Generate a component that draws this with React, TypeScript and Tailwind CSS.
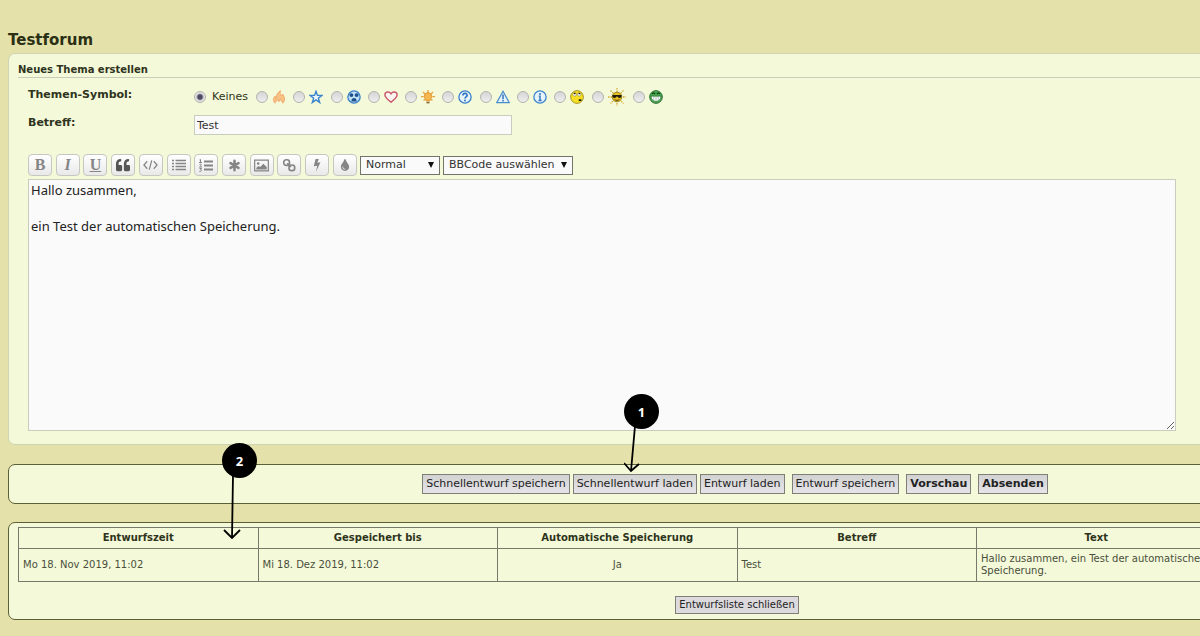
import React, { useState } from 'react';
import { FaQuoteLeft, FaTint } from 'react-icons/fa';

const FlameIcon = () => (
  <svg viewBox="0 0 16 16" className="w-[14px] h-[14px]">
    <path d="M3.500 15C1 12.500 1.200 9.500 3.500 7c.2 1.500.6 2.200 1.300 2.600C4.700 6 6.500 2.600 9.600.8 8.800 3.500 9.500 5 10.900 6.800c.8-.4 1.100-1.100 1-2.200 2.600 3 3.500 7.500.4 10.400-.5-1.800-1.600-3-2.800-4.200-.3 1.300-.9 2-1.800 2.500-.5-.9-.7-1.600-.7-2.500C5 12 4 13.200 3.500 15z" fill="#f9c184" stroke="#f0a060" strokeWidth="1" />
  </svg>
);

const StarIcon = () => (
  <svg viewBox="0 0 16 16" className="w-[14px] h-[14px]">
    <path d="M8 1.500l1.700 4.700 5 .1-4 3.100 1.500 4.900L8 11.400l-4.200 2.900 1.500-4.900-4-3.100 5-.1z" fill="#eef6fb" stroke="#3a84cc" strokeWidth="1.600" />
  </svg>
);

const RadioactiveIcon = () => (
  <svg viewBox="0 0 16 16" className="w-[14px] h-[14px]">
    <circle cx="8" cy="8" r="7" fill="#bfe0f6" stroke="#3a80c8" strokeWidth="1.500" />
    <circle cx="5" cy="5.800" r="2.200" fill="#1d4f8c" />
    <circle cx="11" cy="5.800" r="2.200" fill="#1d4f8c" />
    <path d="M5 13c0-5 6-5 6 0z" fill="#1d4f8c" />
  </svg>
);

const HeartIcon = () => (
  <svg viewBox="0 0 16 16" className="w-[14px] h-[14px]">
    <path d="M8 14C4 11 1 8.500 1 5.500 1 1.800 6 1 8 4.300 10 1 15 1.800 15 5.500 15 8.500 12 11 8 14z" fill="#fdf3ee" stroke="#c9556b" strokeWidth="1.600" />
  </svg>
);

const IdeaIcon = () => (
  <svg viewBox="0 0 16 16" className="w-[14px] h-[14px]">
    <path d="M8 0v3M0 7.500h3M13 7.500h3M2.300 2.300l2 2M13.700 2.300l-2 2M3 12l1.500-1.500M13 12l-1.500-1.500" stroke="#e9a23b" strokeWidth="1.500" />
    <path d="M6 12.500C6 10.500 3.800 10 3.800 7.200a4.200 4.200 0 0 1 8.400 0C12.200 10 10 10.500 10 12.500z" fill="#f6b84e" stroke="#d98c28" />
    <path d="M6.300 13.500h3.400v1.800H6.300z" fill="#8a6a3a" />
  </svg>
);

const QuestionIcon = () => (
  <svg viewBox="0 0 16 16" className="w-[14px] h-[14px]">
    <circle cx="8" cy="8" r="7" fill="#e6f3fb" stroke="#3a80c8" strokeWidth="1.500" />
    <path d="M5.700 6.300c0-3.200 4.700-3 4.700-.3C10.400 7.800 8 7.800 8 9.800" fill="none" stroke="#2f74bd" strokeWidth="1.900" />
    <circle cx="8" cy="12" r="1.100" fill="#2f74bd" />
  </svg>
);

const AlertIcon = () => (
  <svg viewBox="0 0 16 16" className="w-[14px] h-[14px]">
    <path d="M8 1.500L15 14.300H1z" fill="#e6f3fb" stroke="#4a8ccb" strokeWidth="1.400" />
    <path d="M8 5v5.500M8 11.500v1.600" stroke="#2f74bd" strokeWidth="1.700" />
  </svg>
);

const InfoIcon = () => (
  <svg viewBox="0 0 16 16" className="w-[14px] h-[14px]">
    <circle cx="8" cy="8" r="7" fill="#e6f3fb" stroke="#3f86cc" strokeWidth="1.500" />
    <circle cx="8" cy="4.500" r="1.100" fill="#2f74bd" />
    <path d="M6.500 7H8v5M6.300 12h3.500" fill="none" stroke="#2f74bd" strokeWidth="1.600" />
  </svg>
);

const RollEyesIcon = () => (
  <svg viewBox="0 0 16 16" className="w-[14px] h-[14px]">
    <circle cx="8" cy="8" r="7.300" fill="#f7e024" stroke="#8e7c14" strokeWidth=".9" />
    <ellipse cx="5.300" cy="5" rx="2.100" ry="2" fill="#fff" stroke="#6b5c10" strokeWidth=".5" />
    <ellipse cx="10.500" cy="5" rx="2.100" ry="2" fill="#fff" stroke="#6b5c10" strokeWidth=".5" />
    <path d="M4.500 3.300h1.800v1.500H4.500zM9.800 3.300h1.800v1.500H9.800zM10 10.500h3v2h-3z" fill="#1d1a08" />
  </svg>
);

const SunIcon = () => (
  <svg viewBox="0 0 18 18" className="w-[18px] h-[18px]">
    <path d="M9 0v18M0 9h18M2.500 2.500l13 13M15.500 2.500l-13 13" stroke="#d6ae35" strokeWidth="1.300" strokeDasharray="1.500 1" />
    <circle cx="9" cy="9" r="4.800" fill="#e9c222" stroke="#8b7018" strokeWidth=".8" />
    <path d="M4.500 7h9v1.500c0 1.800-3.500 2-4 0h-1c-.5 2-4 1.800-4 0z" fill="#1f1d10" />
    <path d="M6.500 11.300c1.500 1.500 3.500 1.500 5 0" fill="none" stroke="#5b4708" />
  </svg>
);

const GreenGrinIcon = () => (
  <svg viewBox="0 0 16 16" className="w-[14px] h-[14px]">
    <circle cx="8" cy="8" r="7.300" fill="#47a64b" stroke="#1c5c2b" strokeWidth=".9" />
    <path d="M3.500 4.500c1-1.300 2.500-1.300 3.500 0M9 4.500c1-1.300 2.500-1.300 3.500 0" fill="none" stroke="#123d1c" strokeWidth="1.300" />
    <path d="M2.300 7h11.400c0 8-11.400 8-11.400 0z" fill="#fff" stroke="#2b6b38" strokeWidth=".8" />
    <path d="M5.500 7v5M8 7v6M10.500 7v5" stroke="#6b9a74" strokeWidth=".6" />
  </svg>
);

const CodeIcon = () => (
  <svg viewBox="0 0 16 12" className="w-[15px] h-[12px]" fill="none" stroke="currentColor" strokeWidth="1.300">
    <path d="M4.500 2L1 6l3.500 4M11.500 2L15 6l-3.500 4M9.300 1L6.700 11" />
  </svg>
);

const ListIcon = () => (
  <svg viewBox="0 0 14 12" className="w-[14px] h-[12px]" stroke="currentColor" strokeWidth="1.500">
    <path d="M0 1.500h2M0 4.500h2M0 7.500h2M0 10.500h2M3.500 1.500H14M3.500 4.500H14M3.500 7.500H14M3.500 10.500H14" />
  </svg>
);

const NumberedListIcon = () => (
  <svg viewBox="0 0 14 13" className="w-[14px] h-[13px]" fill="none" stroke="currentColor">
    <path d="M5 2.500h9M5 6.500h9M5 10.500h9" strokeWidth="1.800" />
    <path d="M.5 1l1-.5v3M0 3.500h3M.5 5.500c2-1 2.500.5 0 2.500h2.500M.5 9.500h2l-1 1.300c1.500 0 1.500 1.700-1.200 1.500" strokeWidth="1" />
  </svg>
);

const AsteriskIcon = () => (
  <svg viewBox="0 0 14 14" className="w-[13px] h-[13px]" stroke="currentColor" strokeWidth="2.800" strokeLinecap="round">
    <path d="M7 2v10M2.700 4.500l8.600 5M11.300 4.500l-8.600 5" />
  </svg>
);

const ImageIcon = () => (
  <svg viewBox="0 0 16 13" className="w-[15px] h-[13px]">
    <path d="M.7.7h14.600v11.600H.7z" fill="none" stroke="currentColor" strokeWidth="1.300" />
    <circle cx="4.500" cy="4.300" r="1.400" fill="currentColor" />
    <path d="M2.500 10.800V9L5 7l1.500 1.200L10 4.500l3.500 3.700v2.600z" fill="currentColor" />
  </svg>
);

const LinkIcon = () => (
  <svg viewBox="0 0 16 16" className="w-[14px] h-[14px]" fill="none" stroke="currentColor" strokeWidth="1.900">
    <rect x="2" y="2" width="6.500" height="6.500" rx="2.800" />
    <rect x="8" y="8" width="6.500" height="6.500" rx="2.800" />
    <path d="M6 6l4.300 4.300" />
  </svg>
);

const BoltIcon = () => (
  <svg viewBox="0 0 8 14" className="w-[8px] h-[13px]">
    <path d="M2.500 0H6L4.300 4l3.400-.6L3 13.800l1.200-6.600-3.700.7z" fill="currentColor" />
  </svg>
);

const topicIcons = [
  { name: 'Feuer', icon: <FlameIcon /> },
  { name: 'Stern', icon: <StarIcon /> },
  { name: 'Radioaktiv', icon: <RadioactiveIcon /> },
  { name: 'Herz', icon: <HeartIcon /> },
  { name: 'Idee', icon: <IdeaIcon /> },
  { name: 'Frage', icon: <QuestionIcon /> },
  { name: 'Achtung', icon: <AlertIcon /> },
  { name: 'Info', icon: <InfoIcon /> },
  { name: 'Augenrollen', icon: <RollEyesIcon /> },
  { name: 'Sonne', icon: <SunIcon /> },
  { name: 'Grinsen', icon: <GreenGrinIcon /> },
];

const formatButtons = [
  { name: 'Fett', icon: <b>B</b> },
  { name: 'Kursiv', icon: <b className="italic">I</b> },
  { name: 'Unterstrichen', icon: <b className="underline">U</b> },
  { name: 'Zitat', icon: <FaQuoteLeft className="text-[#555]" size={14} /> },
  { name: 'Code', icon: <CodeIcon /> },
  { name: 'Liste', icon: <ListIcon /> },
  { name: 'Nummerierte Liste', icon: <NumberedListIcon /> },
  { name: 'Listenelement', icon: <AsteriskIcon /> },
  { name: 'Bild', icon: <ImageIcon /> },
  { name: 'Link', icon: <LinkIcon /> },
  { name: 'Flash', icon: <BoltIcon /> },
  { name: 'Farbe', icon: <FaTint size={12} /> },
];

const radioClass =
  'appearance-none w-3 h-3 shrink-0 rounded-full border border-[#b3b3b0] bg-linear-to-b from-[#d6d6d6] to-[#eeeeee] checked:bg-[radial-gradient(circle,#4b4b60_2px,#e6e6e6_4px)]';
const panelClass = 'rounded-[7px] border bg-[#f4fad9] px-[9px]';
const buttonClass = 'h-5 border border-[#7f7f78] bg-linear-to-b from-[#d2d2d2] to-[#e6e4e8] px-[3px] text-[11px] leading-4 text-[#222]';
const cellClass = 'border border-[#77796a] px-1';

const Dropdown = ({ label, text, className }: { label: string; text: string; className: string }) => (
  <div className={`relative ${className}`}>
    <select aria-label={label} className="block w-full h-[19px] appearance-none border border-[#71756a] bg-[#fafafa] pl-[5px] text-[11px] leading-4 text-[#333]">
      <option>{text}</option>
    </select>
    <svg viewBox="0 0 6 6" className="absolute right-[6px] top-[6px] w-[6px] h-[6px] pointer-events-none">
      <path d="M0 0h6L3 6z" fill="#111" />
    </svg>
  </div>
);

// Numbered marker with an arrow to the described element
const Marker = ({ number, line, className }: { number: number; line: string; className: string }) => (
  <div className={`absolute w-[35px] pointer-events-none ${className}`}>
    <svg viewBox="0 0 35 96" className="absolute left-0 top-0 w-[35px] h-[96px]" fill="none" stroke="#000" strokeWidth="1.800">
      <path d={line} />
    </svg>
    <span className="relative flex h-[35px] items-center justify-center rounded-full bg-black font-['Open_Sans',sans-serif] text-[13px] font-bold text-white">
      {number}
    </span>
  </div>
);

const App: React.FC = () => {
  const [symbol, setSymbol] = useState('Keines');
  const [subject, setSubject] = useState('Test');
  const [message, setMessage] = useState('Hallo zusammen,\n\nein Test der automatischen Speicherung.');

  return (
    <div className="relative min-h-screen overflow-hidden bg-[#e4e2aa] font-['DejaVu_Sans',sans-serif] text-[11px] leading-4 text-[#2e3320]">
      {/* The board is wider than the window and runs out on the right */}
      <div className="-mr-[274px] px-2 pt-8">
        <h1 className="mb-[5px] text-[15px] font-bold leading-4 text-[#2b2f14]">Testforum</h1>

        <section className={`${panelClass} border-[#cfd3b4] pt-2 pb-[13px]`}>
          <h2 className="border-b border-[#c8ccb8] text-[10px] font-bold leading-[15px]">Neues Thema erstellen</h2>
          <div className="ml-[10px] mt-[9px]">
            <div className="flex h-5 items-center">
              <span id="symbol-label" className="w-[166px] self-start font-bold">Themen-Symbol:</span>
              <div role="radiogroup" aria-labelledby="symbol-label" className="flex items-center gap-2">
                <label className="flex items-center gap-[6px]">
                  <input type="radio" name="symbol" className={radioClass} checked={symbol === 'Keines'} onChange={() => setSymbol('Keines')} />
                  Keines
                </label>
                <div className="flex w-[407px] items-center justify-between">
                  {topicIcons.map(({ name, icon }) => (
                    <label key={name} className="flex items-center gap-1">
                      <input type="radio" name="symbol" aria-label={name} className={radioClass} checked={symbol === name} onChange={() => setSymbol(name)} />
                      {icon}
                    </label>
                  ))}
                </div>
              </div>
            </div>

            <div className="mt-2 flex">
              <label htmlFor="subject" className="w-[166px] font-bold">Betreff:</label>
              <input
                id="subject"
                type="text"
                value={subject}
                onChange={(e) => setSubject(e.target.value)}
                className="h-5 w-[318px] border border-[#c9cdbd] bg-[#fafafa] px-[2px] text-[#333]"
              />
            </div>

            <div className="mt-[19px] flex items-center gap-[3px]">
              <div className="flex w-[329px] justify-between">
                {formatButtons.map(({ name, icon }) => (
                  <button
                    key={name}
                    type="button"
                    aria-label={name}
                    className="flex h-[22px] w-6 items-center justify-center rounded-[4px] border border-[#c5c7c0] bg-linear-to-b from-white to-[#e9e9e9] font-['Liberation_Serif',serif] text-[16px] text-[#858585]"
                  >
                    {icon}
                  </button>
                ))}
              </div>
              <Dropdown label="Schriftgröße" text="Normal" className="w-20" />
              <Dropdown label="BBCode" text="BBCode auswählen" className="w-[130px]" />
            </div>

            <textarea
              aria-label="Nachricht"
              value={message}
              onChange={(e) => setMessage(e.target.value)}
              className="mt-[3px] block h-[252px] w-[calc(100%-280px)] border border-[#c9cdbd] bg-[#fafafa] px-[2px] py-px font-['Noto_Sans',sans-serif] text-[13px] leading-[18px] text-[#222]"
            />
          </div>
        </section>

        <section className={`${panelClass} mt-[19px] flex justify-center gap-[3px] border-[#5d6036] py-[9px]`}>
          <button type="button" className={buttonClass}>Schnellentwurf speichern</button>
          <button type="button" className={buttonClass}>Schnellentwurf laden</button>
          <button type="button" className={buttonClass}>Entwurf laden</button>
          <button type="button" className={`${buttonClass} ml-1`}>Entwurf speichern</button>
          <button type="button" className={`${buttonClass} mx-1 font-bold`}>Vorschau</button>
          <button type="submit" className={`${buttonClass} mr-1 font-bold`}>Absenden</button>
        </section>

        <section className={`${panelClass} mt-[18px] border-[#5d6036] pt-1 pb-[5px]`}>
          <table className="w-full table-fixed border-collapse text-[10px] leading-3">
            <thead>
              <tr className="h-[21px]">
                <th className={cellClass}>Entwurfszeit</th>
                <th className={cellClass}>Gespeichert bis</th>
                <th className={cellClass}>Automatische Speicherung</th>
                <th className={cellClass}>Betreff</th>
                <th className={cellClass}>Text</th>
                <th className={cellClass} />
              </tr>
            </thead>
            <tbody className="text-[#4a4e3c]">
              <tr className="h-[33px]">
                <td className={cellClass}>Mo 18. Nov 2019, 11:02</td>
                <td className={cellClass}>Mi 18. Dez 2019, 11:02</td>
                <td className={`${cellClass} text-center`}>Ja</td>
                <td className={cellClass}>Test</td>
                <td className={cellClass}>Hallo zusammen, ein Test der automatischen Speicherung.</td>
                <td className={cellClass} />
              </tr>
            </tbody>
          </table>
          <div className="mt-[14px] flex justify-center">
            <button type="button" className="h-[18px] border border-[#7f7f78] bg-[#dcdadd] px-[3px] text-[10px] text-[#222]">Entwurfsliste schließen</button>
          </div>
        </section>
      </div>

      <Marker number={1} line="M11 32L7 77M0 69l7 8 8-7" className="left-[624px] top-[394px]" />
      <Marker number={2} line="M11 32L10 95M2 87l8 8 8-8" className="left-[222px] top-[443px]" />
    </div>
  );
};

export default App;
